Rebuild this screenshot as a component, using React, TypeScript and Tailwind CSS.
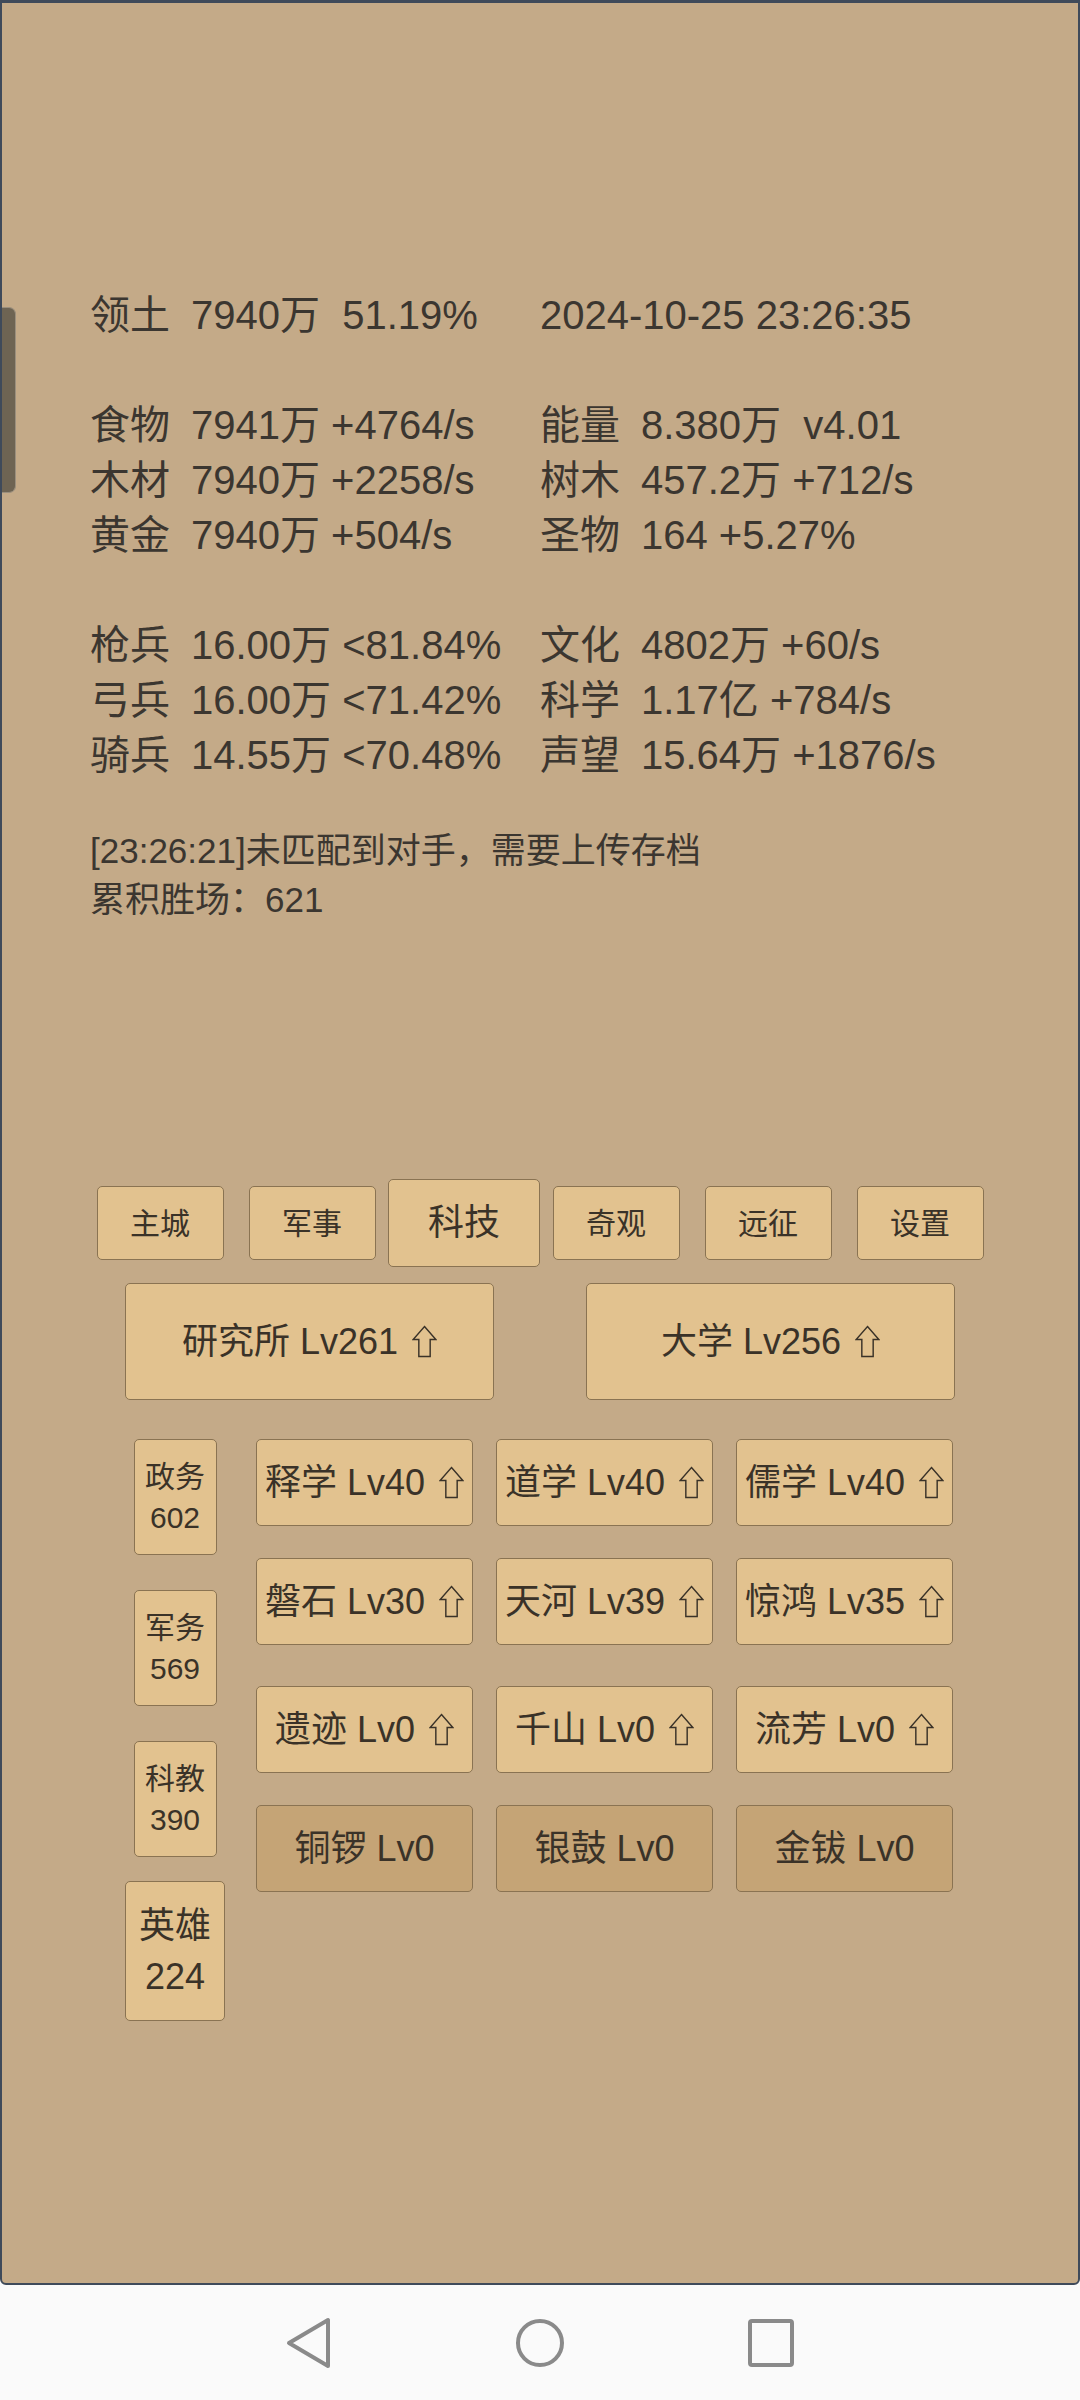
import React from 'react';

const font = "font-['Liberation_Sans','Noto_Sans_CJK_SC',sans-serif]";

type Row = [string, string] | null;

const leftRows: Row[] = [
  ['领土', '7940万  51.19%'],
  null,
  ['食物', '7941万 +4764/s'],
  ['木材', '7940万 +2258/s'],
  ['黄金', '7940万 +504/s'],
  null,
  ['枪兵', '16.00万 <81.84%'],
  ['弓兵', '16.00万 <71.42%'],
  ['骑兵', '14.55万 <70.48%'],
];

const rightRows: Row[] = [
  ['', '2024-10-25 23:26:35'],
  null,
  ['能量', '8.380万  v4.01'],
  ['树木', '457.2万 +712/s'],
  ['圣物', '164 +5.27%'],
  null,
  ['文化', '4802万 +60/s'],
  ['科学', '1.17亿 +784/s'],
  ['声望', '15.64万 +1876/s'],
];

const StatLine = ({ row }: { row: Row }) => {
  if (!row) return <div className="h-[55px]" />;
  const [label, value] = row;
  if (!label) return <div className="h-[55px] whitespace-pre">{value}</div>;
  return (
    <div className="h-[55px] flex">
      <span className="w-[101px] shrink-0">{label}</span>
      <span className="whitespace-pre">{value}</span>
    </div>
  );
};

const UpArrow = () => (
  <svg viewBox="0 0 24 32" className="w-[25px] h-[33px] ml-[14px] shrink-0" fill="none" stroke="#3a3228" strokeWidth="1.4">
    <path d="M12 1.5 L23 14 H17.5 V30.5 H6.5 V14 H1 Z" />
  </svg>
);

const btnBase = 'flex items-center justify-center rounded-[5px] border border-[#8a7352] text-[#3a3228]';

const TechButton = ({ name, level, up = true, locked = false }: { name: string; level: number; up?: boolean; locked?: boolean }) => (
  <div className={`${btnBase} w-[217px] h-[87px] text-[36px] ${locked ? 'bg-[#c5a476]' : 'bg-[#e2c28f]'}`}>
    <span className="whitespace-pre">{`${name} Lv${level}`}</span>
    {up && <UpArrow />}
  </div>
);

const SideButton = ({ title, count, big = false }: { title: string; count: number; big?: boolean }) => (
  <div
    className={`${btnBase} bg-[#e2c28f] flex-col ${
      big ? 'w-[100px] h-[140px] text-[36px] leading-[51px]' : 'w-[83px] h-[116px] text-[30px] leading-[41px]'
    }`}
  >
    <span>{title}</span>
    <span>{count}</span>
  </div>
);

const tabs = ['主城', '军事', '科技', '奇观', '远征', '设置'];

export default function App() {
  return (
    <div className={`w-[1080px] h-[2400px] flex flex-col bg-[#fafafa] ${font}`}>
      {/* game panel */}
      <div className="relative h-[2285px] bg-[#c4aa88] border-2 border-t-[3px] border-[#3f4a5a] rounded-b-[6px] text-[#3b3630]">
        <div className="absolute left-0 top-[304px] w-[14px] h-[186px] rounded-r-[7px] bg-[#6e6453] border border-l-0 border-[#9b8f7d]" />

        {/* stats */}
        <div className="pt-[285px] pl-[88px] grid grid-cols-[450px_1fr] text-[40px] leading-[55px]">
          <div className="flex flex-col">
            {leftRows.map((r, i) => (
              <StatLine key={i} row={r} />
            ))}
          </div>
          <div className="flex flex-col">
            {rightRows.map((r, i) => (
              <StatLine key={i} row={r} />
            ))}
          </div>
        </div>

        {/* log */}
        <div className="mt-[43px] pl-[88px] text-[35px] leading-[49px]">
          <div>[23:26:21]未匹配到对手，需要上传存档</div>
          <div>累积胜场：621</div>
        </div>

        {/* tab row */}
        <div className="mt-[255px] h-[88px] flex justify-center items-center">
          {tabs.map((t) => (
            <div key={t} className="w-[152px] flex justify-center items-center">
              {t === '科技' ? (
                <div className={`${btnBase} border-[#6f5a3d] bg-[#e2c28f] w-[153px] h-[88px] text-[36px]`}>{t}</div>
              ) : (
                <div className={`${btnBase} bg-[#e2c28f] w-[127px] h-[74px] text-[30px]`}>{t}</div>
              )}
            </div>
          ))}
        </div>

        {/* buildings */}
        <div className="mt-[16px] flex justify-center gap-[92px]">
          <div className={`${btnBase} bg-[#e2c28f] w-[369px] h-[117px] text-[36px]`}>
            <span>研究所 Lv261</span>
            <UpArrow />
          </div>
          <div className={`${btnBase} bg-[#e2c28f] w-[369px] h-[117px] text-[36px]`}>
            <span>大学 Lv256</span>
            <UpArrow />
          </div>
        </div>

        {/* tech grid */}
        <div className="mt-[39px] flex gap-[31px] pl-[123px]">
          <div className="w-[100px] flex flex-col items-center">
            <SideButton title="政务" count={602} />
            <div className="mt-[35px]">
              <SideButton title="军务" count={569} />
            </div>
            <div className="mt-[35px]">
              <SideButton title="科教" count={390} />
            </div>
            <div className="mt-[24px]">
              <SideButton title="英雄" count={224} big />
            </div>
          </div>
          <div className="w-[697px] flex flex-col">
            <div className="flex gap-[23px]">
              <TechButton name="释学" level={40} />
              <TechButton name="道学" level={40} />
              <TechButton name="儒学" level={40} />
            </div>
            <div className="flex gap-[23px] mt-[32px]">
              <TechButton name="磐石" level={30} />
              <TechButton name="天河" level={39} />
              <TechButton name="惊鸿" level={35} />
            </div>
            <div className="flex gap-[23px] mt-[41px]">
              <TechButton name="遗迹" level={0} />
              <TechButton name="千山" level={0} />
              <TechButton name="流芳" level={0} />
            </div>
            <div className="flex gap-[23px] mt-[32px]">
              <TechButton name="铜锣" level={0} up={false} locked />
              <TechButton name="银鼓" level={0} up={false} locked />
              <TechButton name="金钹" level={0} up={false} locked />
            </div>
          </div>
        </div>
      </div>

      {/* android nav bar */}
      <div className="h-[115px] flex justify-center items-center gap-[171px]">
        <div className="w-[60px] flex justify-center">
          <svg viewBox="0 0 48 52" className="w-[48px] h-[52px]" fill="none" stroke="#8a8a8a" strokeWidth="4" strokeLinejoin="round">
            <path d="M43 3 V49 L4 26 Z" />
          </svg>
        </div>
        <div className="w-[60px] flex justify-center">
          <svg viewBox="0 0 52 52" className="w-[52px] h-[52px]" fill="none" stroke="#8a8a8a" strokeWidth="4">
            <circle cx="26" cy="26" r="22" />
          </svg>
        </div>
        <div className="w-[60px] flex justify-center">
          <svg viewBox="0 0 48 50" className="w-[48px] h-[50px]" fill="none" stroke="#8a8a8a" strokeWidth="4">
            <rect x="3" y="3" width="42" height="44" rx="2" />
          </svg>
        </div>
      </div>
    </div>
  );
}
